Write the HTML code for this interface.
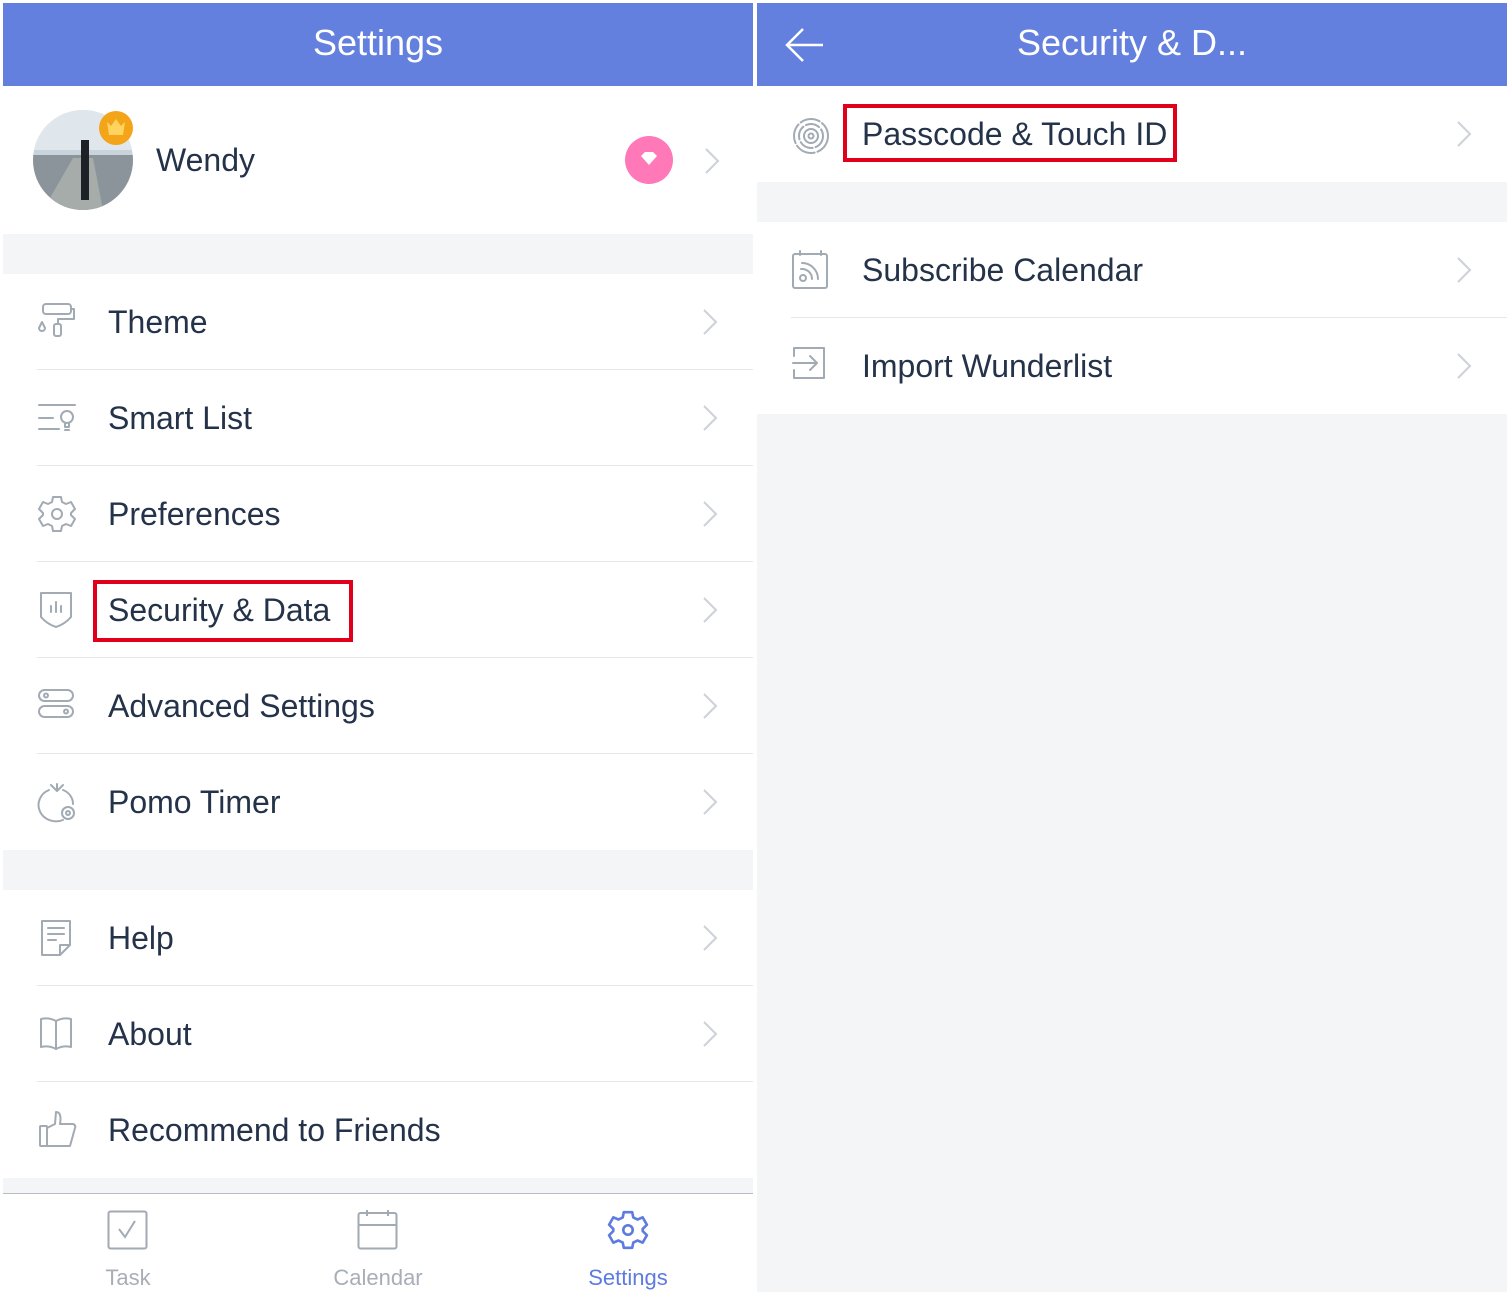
<!DOCTYPE html>
<html><head><meta charset="utf-8"><style>
*{margin:0;padding:0;box-sizing:border-box}
body{width:1512px;height:1296px;background:#fff;position:relative;overflow:hidden;font-family:"Liberation Sans",sans-serif}
.abs{position:absolute}
.hdr{background:#6480df;color:#fff;font-size:36px;top:3px;height:83px;line-height:80px;text-align:center}
.gray{background:#f4f5f7}
.row{position:absolute;height:96px;background:#fff}
.row .t{position:absolute;left:105px;top:0;line-height:96px;font-size:32px;color:#243349}
.row .ic{position:absolute;left:34px;top:28px;width:40px;height:40px}
.row .line{position:absolute;left:34px;right:0;bottom:0;height:1px;background:#e5e7ea}
.chev{position:absolute;width:14px;height:26px;top:35px}
svg{overflow:visible}
.ic path,.ic rect,.ic circle,.ic line{fill:none;stroke:#a2aab3;stroke-width:2;stroke-linecap:round;stroke-linejoin:round}
.box{position:absolute;border:4px solid #e0001b}
</style></head><body>
<!-- LEFT PANEL -->
<div class="abs hdr" style="left:3px;width:750px">Settings</div>
<div class="abs" style="left:3px;top:86px;width:750px;height:148px;background:#fff">
  <svg class="abs" style="left:30px;top:24px" width="100" height="100"><defs><clipPath id="c"><circle cx="50" cy="50" r="50"/></clipPath></defs>
  <g clip-path="url(#c)"><rect width="100" height="100" fill="#c8d3dc"/><rect y="0" width="100" height="40" fill="#dfe6ec"/><rect y="45" width="100" height="55" fill="#8a949a"/><path d="M10 100 L40 48 L60 48 L70 100Z" fill="#a5aca9"/><rect x="48" y="30" width="8" height="60" fill="#1d2025"/></g></svg>
  <svg class="abs" style="left:95px;top:24px" width="36" height="36"><circle cx="18" cy="18" r="17" fill="#f4a418"/><path d="M9 12 L13 16 L18 9 L23 16 L27 12 L25 25 L11 25Z" fill="#ffd45e"/></svg>
  <div class="abs" style="left:153px;top:50px;font-size:32px;color:#243349;line-height:48px">Wendy</div>
  <svg class="abs" style="left:622px;top:50px" width="48" height="48"><circle cx="24" cy="24" r="24" fill="#ff78b8"/><path d="M16 20 L20 16 L28 16 L32 20 L24 29Z" fill="#fff"/></svg>
  <svg class="abs" style="left:702px;top:62px" width="14" height="26"><path d="M1 1 L13 13 L1 25" stroke="#cdd1d8" stroke-width="2" fill="none"/></svg>
</div>
<div class="abs gray" style="left:3px;top:234px;width:750px;height:40px"></div>

<div class="row" style="left:3px;top:274px;width:750px"><svg class="ic" viewBox="0 0 40 40"><rect x="6" y="2" width="28" height="10" rx="3"/><path d="M34 7 h3 v10 h-16 v5"/><rect x="17" y="22" width="7" height="12" rx="2"/><path d="M5 20 l-3 6 a3 3 0 0 0 6 0z"/></svg><div class="t">Theme</div><div class="line"></div><svg class="chev" style="left:700px"><path d="M1 1 L13 13 L1 25" stroke="#cdd1d8" stroke-width="2" fill="none"/></svg></div>
<div class="row" style="left:3px;top:370px;width:750px"><svg class="ic" viewBox="0 0 40 40"><line x1="2" y1="7" x2="38" y2="7"/><line x1="2" y1="20" x2="16" y2="20"/><line x1="2" y1="31" x2="22" y2="31"/><circle cx="30" cy="19" r="6"/><path d="M28 25 v4 h4 v-4"/><line x1="28" y1="32" x2="32" y2="32"/></svg><div class="t">Smart List</div><div class="line"></div><svg class="chev" style="left:700px"><path d="M1 1 L13 13 L1 25" stroke="#cdd1d8" stroke-width="2" fill="none"/></svg></div>
<div class="row" style="left:3px;top:466px;width:750px"><svg class="ic" viewBox="0 0 40 40"><path d="M16 3 h8 l1 5 l4 2 l5 -2 l4 7 l-4 4 v2 l4 4 l-4 7 l-5 -2 l-4 2 l-1 5 h-8 l-1 -5 l-4 -2 l-5 2 l-4 -7 l4 -4 v-2 l-4 -4 l4 -7 l5 2 l4 -2z"/><circle cx="20" cy="20" r="5"/></svg><div class="t">Preferences</div><div class="line"></div><svg class="chev" style="left:700px"><path d="M1 1 L13 13 L1 25" stroke="#cdd1d8" stroke-width="2" fill="none"/></svg></div>
<div class="row" style="left:3px;top:562px;width:750px"><svg class="ic" viewBox="0 0 40 40"><path d="M4 3 h30 v24 q-6 7 -15 10 q-9 -3 -15 -10z"/><line x1="14" y1="16" x2="14" y2="22"/><line x1="19" y1="12" x2="19" y2="22"/><line x1="24" y1="16" x2="24" y2="22"/></svg><div class="t">Security &amp; Data</div><div class="line"></div><svg class="chev" style="left:700px"><path d="M1 1 L13 13 L1 25" stroke="#cdd1d8" stroke-width="2" fill="none"/></svg></div>
<div class="row" style="left:3px;top:658px;width:750px"><svg class="ic" viewBox="0 0 40 40"><rect x="2" y="4" width="34" height="11" rx="5.5"/><rect x="2" y="20" width="34" height="11" rx="5.5"/><circle cx="9" cy="9.5" r="2"/><circle cx="29" cy="25.5" r="2"/></svg><div class="t">Advanced Settings</div><div class="line"></div><svg class="chev" style="left:700px"><path d="M1 1 L13 13 L1 25" stroke="#cdd1d8" stroke-width="2" fill="none"/></svg></div>
<div class="row" style="left:3px;top:754px;width:750px"><svg class="ic" viewBox="0 0 40 40"><path d="M12 8 a16 15 0 1 0 14 30"/><path d="M26 8 a16 15 0 0 1 10 14"/><path d="M14 3 l6 6 l6 -6 M20 9 v-7"/><circle cx="31" cy="31" r="6"/><circle cx="31" cy="31" r="2"/></svg><div class="t">Pomo Timer</div><svg class="chev" style="left:700px"><path d="M1 1 L13 13 L1 25" stroke="#cdd1d8" stroke-width="2" fill="none"/></svg></div>
<div class="abs gray" style="left:3px;top:850px;width:750px;height:40px"></div>
<div class="row" style="left:3px;top:890px;width:750px"><svg class="ic" viewBox="0 0 40 40"><path d="M5 3 h28 v24 l-10 10 h-18z"/><path d="M33 27 h-10 v10"/><line x1="11" y1="10" x2="27" y2="10"/><line x1="11" y1="16" x2="27" y2="16"/><line x1="11" y1="22" x2="19" y2="22"/></svg><div class="t">Help</div><div class="line"></div><svg class="chev" style="left:700px"><path d="M1 1 L13 13 L1 25" stroke="#cdd1d8" stroke-width="2" fill="none"/></svg></div>
<div class="row" style="left:3px;top:986px;width:750px"><svg class="ic" viewBox="0 0 40 40"><path d="M4 5 q8 -2 15 2 q7 -4 15 -2 v28 q-8 -2 -15 2 q-7 -4 -15 -2z"/><line x1="19" y1="7" x2="19" y2="35"/></svg><div class="t">About</div><div class="line"></div><svg class="chev" style="left:700px"><path d="M1 1 L13 13 L1 25" stroke="#cdd1d8" stroke-width="2" fill="none"/></svg></div>
<div class="row" style="left:3px;top:1082px;width:750px"><svg class="ic" viewBox="0 0 40 40"><rect x="3" y="16" width="7" height="20" rx="1"/><path d="M10 18 l8 -4 l1 -12 q6 0 4 12 h13 q3 1 2 4 l-5 18 h-23"/></svg><div class="t">Recommend to Friends</div></div>
<div class="abs gray" style="left:3px;top:1178px;width:750px;height:15px"></div>
<div class="abs" style="left:3px;top:1193px;width:750px;height:1px;background:#b6bcc4"></div>
<svg class="abs" style="left:107px;top:1210px" width="42" height="40"><rect x="1.5" y="1.5" width="38" height="37" rx="2" fill="none" stroke="#a2aab3" stroke-width="2"/><path d="M12 19 l6 8 l10 -16" fill="none" stroke="#a2aab3" stroke-width="2"/></svg>
<svg class="abs" style="left:357px;top:1210px" width="42" height="40"><rect x="1.5" y="3" width="38" height="35.5" rx="2" fill="none" stroke="#a2aab3" stroke-width="2"/><line x1="1.5" y1="15" x2="39.5" y2="15" stroke="#a2aab3" stroke-width="2"/><line x1="10" y1="0" x2="10" y2="6" stroke="#a2aab3" stroke-width="2"/><line x1="31" y1="0" x2="31" y2="6" stroke="#a2aab3" stroke-width="2"/></svg>
<svg class="abs" style="left:607px;top:1208px" width="42" height="44" viewBox="0 0 40 40"><path d="M16 3 h8 l1 5 l4 2 l5 -2 l4 7 l-4 4 v2 l4 4 l-4 7 l-5 -2 l-4 2 l-1 5 h-8 l-1 -5 l-4 -2 l-5 2 l-4 -7 l4 -4 v-2 l-4 -4 l4 -7 l5 2 l4 -2z" fill="none" stroke="#5d7be0" stroke-width="2.5" stroke-linejoin="round"/><circle cx="20" cy="20" r="4.5" fill="none" stroke="#5d7be0" stroke-width="2.5"/></svg>
<div class="abs" style="left:53px;width:150px;top:1265px;text-align:center;font-size:22px;color:#a7aeb7">Task</div>
<div class="abs" style="left:303px;width:150px;top:1265px;text-align:center;font-size:22px;color:#a7aeb7">Calendar</div>
<div class="abs" style="left:553px;width:150px;top:1265px;text-align:center;font-size:22px;color:#5d7be0">Settings</div>
<div class="box" style="left:93px;top:580px;width:260px;height:62px"></div>

<!-- RIGHT PANEL -->
<div class="abs hdr" style="left:757px;width:750px">Security &amp; D...</div>
<svg class="abs" style="left:785px;top:27px" width="40" height="36"><path d="M38 18 H3 M18 2 L2 18 L18 34" stroke="#fff" stroke-width="2.5" fill="none"/></svg>
<div class="abs gray" style="left:757px;top:86px;width:750px;height:1206px"></div>
<div class="row" style="left:757px;top:86px;width:750px"><svg class="ic" style="top:30px" viewBox="0 0 40 40"><circle cx="20" cy="20" r="17" stroke-dasharray="20 3"/><circle cx="20" cy="20" r="12" stroke-dasharray="14 3"/><circle cx="20" cy="20" r="7"/><circle cx="20" cy="20" r="2.5"/></svg><div class="t">Passcode &amp; Touch ID</div><svg class="chev" style="left:700px"><path d="M1 1 L13 13 L1 25" stroke="#cdd1d8" stroke-width="2" fill="none"/></svg></div>
<div class="row" style="left:757px;top:222px;width:750px"><svg class="ic" viewBox="0 0 40 40"><rect x="2" y="4" width="34" height="34" rx="2"/><line x1="9" y1="1" x2="9" y2="5"/><line x1="30" y1="1" x2="30" y2="5"/><circle cx="12" cy="28" r="3"/><path d="M10 19 a10 10 0 0 1 11 10 M11 13 a16 16 0 0 1 16 16"/></svg><div class="t">Subscribe Calendar</div><div class="line"></div><svg class="chev" style="left:700px"><path d="M1 1 L13 13 L1 25" stroke="#cdd1d8" stroke-width="2" fill="none"/></svg></div>
<div class="row" style="left:757px;top:318px;width:750px"><svg class="ic" viewBox="0 0 40 40"><path d="M3 10 v-8 h30 v30 h-30 v-8"/><path d="M2 17 h24 M19 10 l7 7 l-7 7"/></svg><div class="t">Import Wunderlist</div><svg class="chev" style="left:700px"><path d="M1 1 L13 13 L1 25" stroke="#cdd1d8" stroke-width="2" fill="none"/></svg></div>
<div class="box" style="left:843px;top:104px;width:334px;height:58px"></div>
</body></html>
